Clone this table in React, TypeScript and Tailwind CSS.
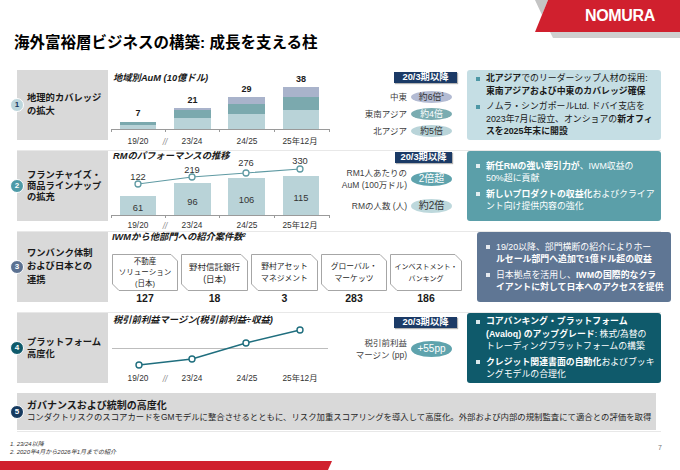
import type { ReactNode } from "react";

const LIGHT = "#b9d3d8";
const TEAL = "#7ba9ae";
const LAV = "#a9b3cb";

function Logo() {
  return (
    <svg width="160" height="40" className="shrink-0">
      <polygon points="15,0 28,0 22,15" fill="#c4c4c4" />
      <polygon points="30,32 160,32 160,38 33,38" fill="#cfcfcf" />
      <polygon points="28,0 160,0 160,32 15,32" fill="#d0202e" />
      <text x="100" y="21" textAnchor="middle" fontSize="16" fontWeight="700" fill="#fff" letterSpacing="-0.3">
        NOMURA
      </text>
    </svg>
  );
}

function Num({ n, tone }: { n: number; tone: string }) {
  return (
    <div
      className={`z-10 flex h-[14px] w-[14px] shrink-0 items-center justify-center rounded-full border-[1.5px] border-white text-[8px] font-bold leading-none ${tone}`}
    >
      {n}
    </div>
  );
}

function Pillar({ n, tone, leading, children }: { n: number; tone: string; leading: string; children: ReactNode }) {
  return (
    <div className="flex h-[70px] w-[98px] shrink-0 items-center">
      <Num n={n} tone={tone} />
      <div className={`-ml-[7px] flex h-full w-[91px] items-center bg-[#d9d9d9] pl-[10px] text-[9.3px] font-bold text-[#1a1a1a] ${leading}`}>
        <div>{children}</div>
      </div>
    </div>
  );
}

function Badge({ wide }: { wide?: boolean }) {
  return (
    <div
      className={`flex items-center justify-center bg-[#1b3a66] text-[9.3px] font-bold leading-none text-white shadow-[1px_1px_1px_rgba(0,0,0,0.3)] ${
        wide ? "-mr-[5px] h-[11px] w-[63px]" : "h-[11px] w-[57px]"
      }`}
    >
      20/3期以降
    </div>
  );
}

function PillRow({ label, pill, children }: { label: ReactNode; pill: string; children: ReactNode }) {
  return (
    <div className="flex items-center gap-[4px]">
      <div className="whitespace-nowrap text-right text-[8.5px] leading-[12px] text-[#404040]">{label}</div>
      <div className={`flex w-[41px] items-center justify-center rounded-[50%] leading-none ${pill}`}>{children}</div>
    </div>
  );
}

function InfoBox({ tone, bullet, items }: { tone: string; bullet: string; items: ReactNode[] }) {
  return (
    <div
      className={`ml-[15px] flex h-[70px] w-[194px] shrink-0 flex-col justify-center gap-[3px] rounded-[3px] pl-[9px] text-[8.9px] leading-[12.5px] ${tone}`}
    >
      {items.map((item, i) => (
        <div key={i} className="flex gap-[6px]">
          <span className={`mt-[4.5px] h-[4px] w-[4px] shrink-0 ${bullet}`} />
          <div className="whitespace-nowrap">{item}</div>
        </div>
      ))}
    </div>
  );
}

function XLabels({ y }: { y: number }) {
  return (
    <g fontSize="8.3" fill="#333">
      <text x="27" y={y} textAnchor="middle">19/20</text>
      <text x="54" y={y + 1} textAnchor="middle" fill="#8a8a8a" fontStyle="italic">//</text>
      <text x="81" y={y} textAnchor="middle">23/24</text>
      <text x="136" y={y} textAnchor="middle">24/25</text>
      <text x="189" y={y} textAnchor="middle">25年12月</text>
    </g>
  );
}

function Axis({ y }: { y: number }) {
  return (
    <g stroke="#9a9a9a" strokeWidth="1">
      <line x1="0" y1={y + 0.5} x2="219" y2={y + 0.5} />
      {[0.5, 54.5, 108.5, 163.5, 218.5].map((x) => (
        <line key={x} x1={x} y1={y} x2={x} y2={y + 3} />
      ))}
    </g>
  );
}

function ChartTitle({ y, children }: { y: number; children: ReactNode }) {
  return (
    <text x="2" y={y} fontSize="9.3" fontWeight="700" fontStyle="italic" fill="#1a1a1a">
      {children}
    </text>
  );
}

function AumChart() {
  return (
    <svg width="220" height="80" className="ml-[3px] shrink-0">
      <ChartTitle y={11}>地域別AuM (10億ドル)</ChartTitle>
      <rect x="9" y="52" width="36" height="3" fill={TEAL} />
      <rect x="9" y="55" width="36" height="4" fill={LIGHT} />
      <rect x="63" y="38" width="37" height="2" fill={LAV} />
      <rect x="63" y="40" width="37" height="8" fill={TEAL} />
      <rect x="63" y="48" width="37" height="11" fill={LIGHT} />
      <rect x="117" y="27" width="37" height="7" fill={LAV} />
      <rect x="117" y="34" width="37" height="10" fill={TEAL} />
      <rect x="117" y="44" width="37" height="15" fill={LIGHT} />
      <rect x="172" y="17" width="36" height="10" fill={LAV} />
      <rect x="172" y="27" width="36" height="13" fill={TEAL} />
      <rect x="172" y="40" width="36" height="19" fill={LIGHT} />
      <g fontSize="9" fontWeight="700" fill="#1a1a1a" textAnchor="middle">
        <text x="27" y="46">7</text>
        <text x="81.5" y="33">21</text>
        <text x="135.5" y="22">29</text>
        <text x="190" y="12">38</text>
      </g>
      <Axis y={59} />
      <XLabels y={74} />
    </svg>
  );
}

function RmChart() {
  const pts: [number, number][] = [
    [27, 33],
    [81, 26],
    [135, 22],
    [189, 18],
  ];
  return (
    <svg width="220" height="80" className="ml-[3px] shrink-0">
      <ChartTitle y={8}>RMのパフォーマンスの推移</ChartTitle>
      <rect x="9" y="45" width="36" height="19" fill={LIGHT} />
      <rect x="63" y="32" width="37" height="32" fill={LIGHT} />
      <rect x="117" y="27" width="37" height="37" fill={LIGHT} />
      <rect x="172" y="25" width="36" height="39" fill={LIGHT} />
      <g fontSize="9.3" fill="#333" textAnchor="middle">
        <text x="27" y="59.5">61</text>
        <text x="81.5" y="53.5">96</text>
        <text x="135.5" y="51.5">106</text>
        <text x="190" y="49.5">115</text>
      </g>
      <Axis y={64} />
      <polyline points={pts.map((p) => p.join(",")).join(" ")} fill="none" stroke="#5f9aa3" strokeWidth="1.2" />
      {pts.map(([x, y]) => (
        <circle key={x} cx={x} cy={y} r="3" fill="#fff" stroke="#5f9aa3" strokeWidth="1.3" />
      ))}
      <g fontSize="9.3" fill="#333" textAnchor="middle">
        <text x="27" y="28.5">122</text>
        <text x="81" y="21.5">219</text>
        <text x="135" y="14.5">276</text>
        <text x="189" y="12.5">330</text>
      </g>
      <XLabels y={77} />
    </svg>
  );
}

function MarginChart() {
  const pts: [number, number][] = [
    [28, 52],
    [81, 46],
    [135, 30],
    [189, 17],
  ];
  return (
    <svg width="220" height="80" className="ml-[3px] shrink-0">
      <ChartTitle y={9.5}>税引前利益マージン(税引前利益÷収益)</ChartTitle>
      <line x1="1" y1="35.5" x2="217" y2="35.5" stroke="#bdbdbd" strokeWidth="1" />
      <polyline points={pts.map((p) => p.join(",")).join(" ")} fill="none" stroke="#1f6e7e" strokeWidth="1.5" />
      {pts.map(([x, y]) => (
        <circle key={x} cx={x} cy={y} r="3" fill="#fff" stroke="#1f6e7e" strokeWidth="1.4" />
      ))}
      <XLabels y={68} />
    </svg>
  );
}

function DeptBox({ w, width, text, children, n }: { w: number; width: string; text: string; children: ReactNode; n: string }) {
  return (
    <div className="flex flex-col items-center">
      <div className={`relative flex h-[37px] items-center justify-center ${width}`}>
        <svg className="absolute inset-0" width={w} height="37">
          <polygon
            points={`0.5,0.5 ${w - 7},0.5 ${w - 0.5},7 ${w - 0.5},36.5 7,36.5 0.5,30`}
            fill="#fff"
            stroke="#a6a6a6"
            strokeWidth="1"
          />
        </svg>
        <div className={`relative whitespace-nowrap text-center text-[#262626] ${text}`}>{children}</div>
      </div>
      <div className="mt-[1px] text-[10.5px] font-bold leading-[12px] text-[#1a1a1a]">{n}</div>
    </div>
  );
}

function Divider() {
  return <div className="ml-[17px] h-px w-[644px] shrink-0 bg-[#e8e8e8]" />;
}

export default function App() {
  return (
    <div className="relative flex h-[470px] w-[680px] flex-col overflow-hidden bg-white font-['Liberation_Sans','Noto_Sans_CJK_JP',sans-serif] text-[#1a1a1a]">
      <header className="flex h-[70px] shrink-0 justify-between">
        <h1 className="pl-[14px] pt-[34px] text-[15.5px] font-bold leading-[18px] text-black">
          海外富裕層ビジネスの構築: 成長を支える柱
        </h1>
        <Logo />
      </header>

      {/* 1 地理的カバレッジ */}
      <div className="ml-[10px] flex h-[80px] shrink-0">
        <Pillar n={1} tone="bg-[#bcd6dc] text-[#17375e]" leading="leading-[13px]">
          地理的カバレッジ
          <br />
          の拡大
        </Pillar>
        <AumChart />
        <div className="flex w-[121px] shrink-0 flex-col items-end pt-[2px]">
          <Badge wide />
          <div className="mt-[8px] flex flex-col items-end gap-[5px]">
            <PillRow label="中東" pill="h-[12px] bg-[#b3bbd3] text-[8.8px] text-[#333]">
              約6倍<span className="relative -top-[3px] text-[5px]">1</span>
            </PillRow>
            <PillRow label="東南アジア" pill="h-[12px] bg-[#7aacb1] text-[8.8px] text-white">
              約4倍
            </PillRow>
            <PillRow label="北アジア" pill="h-[12px] bg-[#b9d4d9] text-[8.8px] text-[#333]">
              約5倍
            </PillRow>
          </div>
        </div>
        <InfoBox
          tone="bg-[#c5dee4] text-[#1a1a1a]"
          bullet="bg-[#4d97a5]"
          items={[
            <>
              <b>北アジア</b>でのリーダーシップ人材の採用:
              <br />
              <b>東南アジアおよび中東のカバレッジ確保</b>
            </>,
            <>
              ノムラ・シンガポールLtd. ドバイ支店を
              <br />
              2023年7月に設立、オンショアの<b>新オフィ</b>
              <br />
              <b>スを2025年末に開設</b>
            </>,
          ]}
        />
      </div>
      <Divider />

      {/* 2 フランチャイズ */}
      <div className="ml-[10px] flex h-[80px] shrink-0">
        <Pillar n={2} tone="bg-[#4d9aa7] text-white" leading="leading-[11px]">
          フランチャイズ・
          <br />
          商品ラインナップ
          <br />
          の拡充
        </Pillar>
        <RmChart />
        <div className="flex w-[121px] shrink-0 flex-col items-end pt-[1px]">
          <Badge />
          <div className="mt-[4px] flex flex-col items-end gap-[8px]">
            <PillRow
              label={
                <>
                  RM1人あたりの
                  <br />
                  AuM (100万ドル)
                </>
              }
              pill="h-[14px] bg-[#5fa3ad] text-[10px] text-white"
            >
              2倍超
            </PillRow>
            <PillRow label="RMの人数 (人)" pill="h-[14px] bg-[#bdd8dc] text-[10px] text-[#333]">
              約2倍
            </PillRow>
          </div>
        </div>
        <InfoBox
          tone="bg-[#5b9fa9] text-white"
          bullet="bg-[#e3eff1]"
          items={[
            <>
              <b>新任RMの強い牽引力が</b>、IWM収益の
              <br />
              50%超に貢献
            </>,
            <>
              <b>新しいプロダクトの収益化</b>およびクライア
              <br />
              ント向け提供内容の強化
            </>,
          ]}
        />
      </div>
      <Divider />

      {/* 3 ワンバンク */}
      <div className="ml-[10px] flex h-[80px] shrink-0">
        <Pillar n={3} tone="bg-[#5b7191] text-white" leading="leading-[13.5px]">
          ワンバンク体制
          <br />
          および日本との
          <br />
          連携
        </Pillar>
        <div className="ml-[4px] flex w-[350px] shrink-0 flex-col">
          <div className="text-[9.3px] font-bold italic leading-[11px]">
            IWMから他部門への紹介案件数<span className="relative -top-[3px] text-[5.5px]">2</span>
          </div>
          <div className="mt-[10px] flex gap-[3px]">
            <DeptBox w={66} width="w-[66px]" text="text-[7.5px] leading-[11px]" n="127">
              不動産
              <br />
              ソリューション
              <br />
              (日本)
            </DeptBox>
            <DeptBox w={67} width="w-[67px]" text="text-[8.5px] leading-[12px]" n="18">
              野村信託銀行
              <br />
              (日本)
            </DeptBox>
            <DeptBox w={67} width="w-[67px]" text="text-[7.8px] leading-[12px]" n="3">
              野村アセット
              <br />
              マネジメント
            </DeptBox>
            <DeptBox w={66} width="w-[66px]" text="text-[7.8px] leading-[12px]" n="283">
              グローバル・
              <br />
              マーケッツ
            </DeptBox>
            <DeptBox w={72} width="w-[72px]" text="text-[7px] leading-[12px]" n="186">
              インベストメント・
              <br />
              バンキング
            </DeptBox>
          </div>
        </div>
        <InfoBox
          tone="ml-[5px] bg-[#5f7694] text-white"
          bullet="bg-[#e4e8ee]"
          items={[
            <>
              19/20以降、部門横断の紹介によりホー
              <br />
              <b>ルセール部門へ追加で1億ドル超の収益</b>
            </>,
            <>
              日本拠点を活用し、<b>IWMの国際的なクラ</b>
              <br />
              <b>イアントに対して日本へのアクセスを提供</b>
            </>,
          ]}
        />
      </div>
      <Divider />

      {/* 4 プラットフォーム */}
      <div className="ml-[10px] flex h-[80px] shrink-0">
        <Pillar n={4} tone="bg-[#0e5a6b] text-white" leading="leading-[12px]">
          プラットフォーム
          <br />
          高度化
        </Pillar>
        <MarginChart />
        <div className="flex w-[121px] shrink-0 flex-col items-end pt-[4px]">
          <Badge wide />
          <div className="mt-[9px] flex flex-col items-end">
            <PillRow
              label={
                <>
                  税引前利益
                  <br />
                  マージン (pp)
                </>
              }
              pill="h-[16px] bg-[#5fa3ad] text-[10px] text-white"
            >
              +55pp
            </PillRow>
          </div>
        </div>
        <InfoBox
          tone="bg-[#0f5a6b] text-white"
          bullet="bg-[#dbe9ec]"
          items={[
            <>
              <b>コアバンキング・プラットフォーム</b>
              <br />
              <b>(Avaloq) のアップグレード</b>: 株式/為替の
              <br />
              トレーディングプラットフォームの構築
            </>,
            <>
              <b>クレジット関連書面の自動化</b>およびブッキ
              <br />
              ングモデルの合理化
            </>,
          ]}
        />
      </div>

      {/* 5 ガバナンス */}
      <div className="ml-[10px] flex h-[37px] shrink-0 items-center">
        <Num n={5} tone="bg-[#163a5f] text-white" />
        <div className="-ml-[7px] flex h-full w-[639px] flex-col justify-center bg-[#d9d9d9] pl-[10px]">
          <div className="text-[10px] font-bold leading-[12px] text-[#1a1a1a]">ガバナンスおよび統制の高度化</div>
          <div className="whitespace-nowrap text-[8.4px] leading-[11px] text-[#262626]">
            コンダクトリスクのスコアカードをGMモデルに整合させるとともに、リスク加重スコアリングを導入して高度化。外部および内部の規制監査にて適合との評価を取得
          </div>
        </div>
      </div>
      <div className="mt-[1px]">
        <Divider />
      </div>

      <div className="mt-[8px] flex items-center justify-between pl-[10px] pr-[18px]">
        <div className="text-[6px] italic leading-[8px] text-[#333]">
          1. 23/24以降
          <br />
          2. 2020年4月から2026年1月までの紹介
        </div>
        <div className="text-[7px] text-[#777]">7</div>
      </div>

      <div className="mt-auto h-[9px] w-[332px] shrink-0 bg-[#d0202e] [clip-path:polygon(0_0,100%_0,calc(100%_-_4px)_100%,0_100%)]" />
    </div>
  );
}
